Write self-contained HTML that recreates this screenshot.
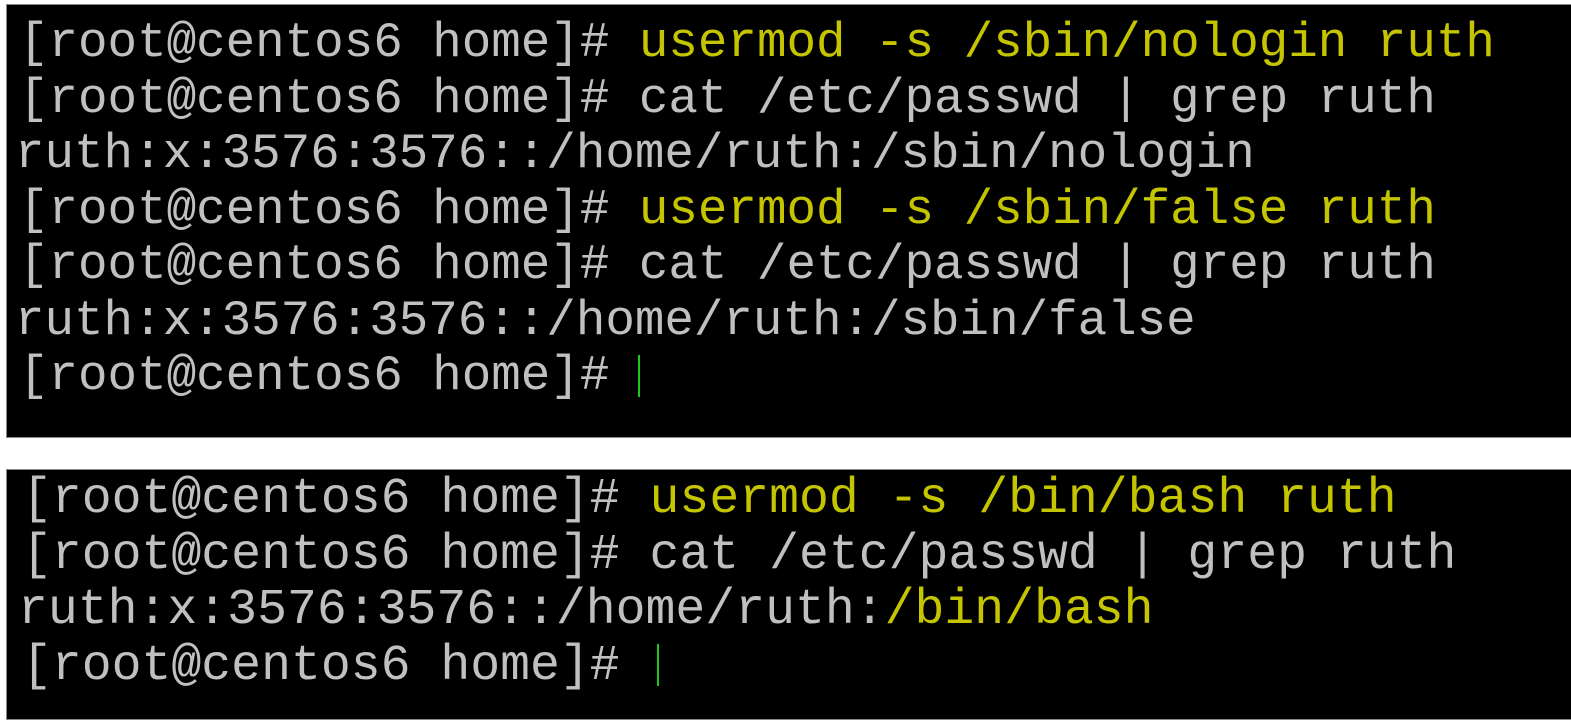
<!DOCTYPE html>
<html><head><meta charset="utf-8"><style>
html,body{margin:0;padding:0;background:#fff;width:1571px;height:725px;overflow:hidden;position:relative}
.p{position:absolute;left:6px;right:0;background:#000;border-top:1px solid #888;border-left:1px solid #888;border-bottom:1px solid #888;font-family:"Liberation Mono",monospace;color:#c0c0c0;white-space:pre}
.p div{height:55.5px;line-height:55.5px}
.y{color:#c4c400}
.c{display:inline-block;width:2px;height:42px;background:#1ec81e;vertical-align:middle;margin-left:-1px}
#b .c{margin-left:7px}
#a{top:4px;height:432px;font-size:49.2px;padding-left:12px}
#a .first{margin-top:11px}
#b{top:469px;height:249px;font-size:49.8px;padding-left:15px}
#b .first{margin-top:2px}
</style></head><body>
<div class="p" id="a"><div class="first">[root@centos6 home]# <span class="y">usermod -s /sbin/nologin ruth</span></div><div>[root@centos6 home]# cat /etc/passwd | grep ruth</div><div style="margin-left:-4px">ruth:x:3576:3576::/home/ruth:/sbin/nologin</div><div>[root@centos6 home]# <span class="y">usermod -s /sbin/false ruth</span></div><div>[root@centos6 home]# cat /etc/passwd | grep ruth</div><div style="margin-left:-4px">ruth:x:3576:3576::/home/ruth:/sbin/false</div><div>[root@centos6 home]# <span class="c"></span></div></div>
<div class="p" id="b"><div class="first">[root@centos6 home]# <span class="y">usermod -s /bin/bash ruth</span></div><div>[root@centos6 home]# cat /etc/passwd | grep ruth</div><div style="margin-left:-4px">ruth:x:3576:3576::/home/ruth:<span class="y">/bin/bash</span></div><div>[root@centos6 home]# <span class="c"></span></div></div>
</body></html>
